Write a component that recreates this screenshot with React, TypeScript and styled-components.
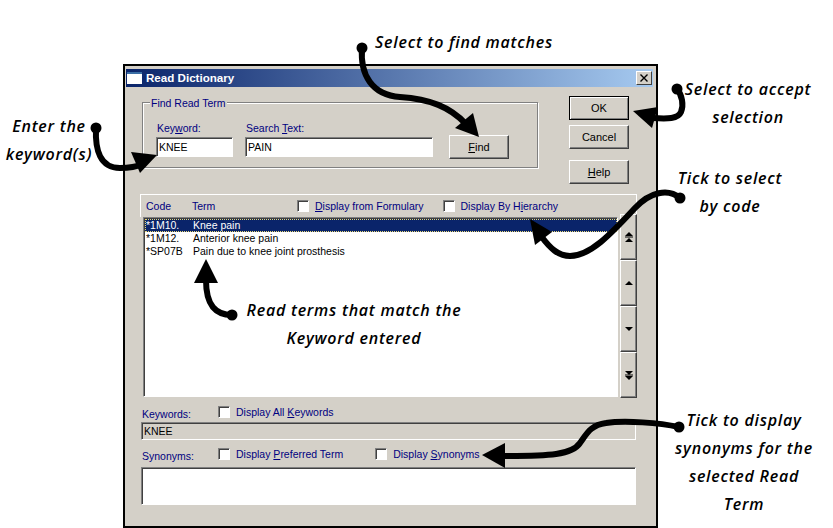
import React from "react";
import styled, { createGlobalStyle } from "styled-components";

const Global = createGlobalStyle`
  html, body { margin: 0; padding: 0; background: #fff; }
  #root { width: 833px; height: 528px; }
`;

const Canvas = styled.div`
  position: relative;
  width: 833px;
  height: 528px;
  overflow: hidden;
  background: #fff;
  padding: 64px 0 0 123px;
  box-sizing: border-box;
  font-family: "Liberation Sans", Arial, sans-serif;
  font-size: 10.5px;
`;

const Dialog = styled.div`
  width: 535px;
  height: 464px;
  box-sizing: border-box;
  background: #d4d0c8;
  border: 2px solid #000;
  padding: 3px 3px 0 1px;
  color: #000080;
`;

const TitleBar = styled.div`
  height: 18px;
  display: flex;
  align-items: center;
  background: linear-gradient(90deg, #0a246a 0%, #a6caf0 100%);
  color: #fff;
  font-weight: 700;
  font-size: 11.6px;
  padding: 0 1px 1px 0;
  box-sizing: border-box;
`;

const TitleIcon = styled.span`
  width: 15px;
  height: 12px;
  margin: 0 4px 0 1px;
  background: #fff;
  border-top: 2px solid #3a6ea5;
  box-sizing: border-box;
`;

const TitleText = styled.span`
  flex: 1;
`;

const CloseButton = styled.span`
  width: 16px;
  height: 14px;
  box-sizing: border-box;
  background: #d4d0c8;
  border: 1px solid;
  border-color: #fff #404040 #404040 #fff;
  color: #000;
  display: flex;
  align-items: center;
  justify-content: center;
`;

const TopRow = styled.div`
  display: flex;
  margin: 9px 0 0 16px;
`;

const GroupBox = styled.div`
  width: 396px;
  height: 66px;
  box-sizing: border-box;
  margin: 6px 0 0;
  padding: 0 0 0 13px;
  border: 1px solid #808080;
  box-shadow: 1px 1px 0 #fff, inset 1px 1px 0 #fff;
  position: relative;
  display: flex;
  gap: 12px;
`;

const Legend = styled.span`
  position: absolute;
  left: 7px;
  top: -6px;
  padding: 0 1px;
  line-height: 12px;
  background: #d4d0c8;
  white-space: nowrap;
`;

const FieldColumn = styled.div`
  display: flex;
  flex-direction: column;
  margin-top: 19px;
`;

const FieldLabel = styled.label`
  line-height: 13px;
  margin: 0 0 2px 1px;
  height: 13px;
  white-space: nowrap;
`;

const TextInput = styled.div<{ $w: number }>`
  width: ${(p) => p.$w}px;
  height: 20px;
  box-sizing: border-box;
  background: #fff;
  border: 1px solid;
  border-color: #808080 #fff #fff #808080;
  box-shadow: inset 1px 1px 0 #404040;
  color: #000;
  line-height: 18px;
  padding-left: 2px;
`;

const PushButton = styled.div<{ $default?: boolean }>`
  width: 60px;
  height: 24px;
  box-sizing: border-box;
  background: #d4d0c8;
  color: #000;
  font-size: 11px;
  display: flex;
  align-items: center;
  justify-content: center;
  border: 1px solid;
  border-color: ${(p) => (p.$default ? "#000" : "#fff #404040 #404040 #fff")};
  box-shadow: ${(p) => (p.$default ? "inset 1px 1px 0 #fff, inset -1px -1px 0 #808080" : "inset -1px -1px 0 #808080")};
`;

const FindButton = styled(PushButton)`
  margin: 32px 0 0 4px;
`;

const ButtonColumn = styled.div`
  display: flex;
  flex-direction: column;
  margin-left: 31px;
`;

const CancelButton = styled(PushButton)`
  margin-top: 5px;
`;

const HelpButton = styled(PushButton)`
  margin-top: 11px;
`;

const Key = styled.u`
  text-decoration: underline;
`;

const ListArea = styled.div`
  margin: 10px 0 0 14px;
  width: 497px;
`;

const ListHeader = styled.div`
  height: 23px;
  box-sizing: border-box;
  border: 1px solid #fff;
  border-bottom: 0;
  display: flex;
  align-items: center;
  padding-left: 5px;
`;

const CodeHead = styled.span`
  width: 46px;
`;

const TermHead = styled.span`
  width: 105px;
`;

const Check = styled.label<{ $gap?: number }>`
  display: inline-flex;
  align-items: center;
  gap: 6px;
  white-space: nowrap;
  margin-right: ${(p) => p.$gap ?? 0}px;
`;

const Box = styled.span`
  width: 12px;
  height: 12px;
  box-sizing: border-box;
  background: #fff;
  border: 1px solid;
  border-color: #808080 #fff #fff #808080;
  box-shadow: inset 1px 1px 0 #404040;
`;

const ListBody = styled.div`
  display: flex;
  align-items: flex-start;
`;

const TermList = styled.div`
  width: 476px;
  height: 180px;
  box-sizing: border-box;
  margin: 0 0 0 3px;
  background: #fff;
  border: 1px solid;
  border-color: #808080 #fff #fff #808080;
  box-shadow: inset 1px 1px 0 #404040;
  padding: 1px 0 0 1px;
  color: #000;
`;

const TermRow = styled.div<{ $selected?: boolean }>`
  height: 13px;
  display: flex;
  align-items: center;
  box-sizing: border-box;
  padding: 0 0 1px 1px;
  background: ${(p) => (p.$selected ? "#0a246a" : "transparent")};
  color: ${(p) => (p.$selected ? "#fff" : "#000")};
  outline: ${(p) => (p.$selected ? "1px dotted #e8d878" : "none")};
  outline-offset: -1px;
`;

const CodeCell = styled.span`
  width: 47px;
`;

const ScrollColumn = styled.div`
  width: 17px;
  margin: -3px 0 0 2px;
  display: flex;
  flex-direction: column;
`;

const ScrollButton = styled.div`
  height: 46px;
  box-sizing: border-box;
  background: #d4d0c8;
  border: 1px solid;
  border-color: #fff #404040 #404040 #fff;
  box-shadow: inset -1px -1px 0 #808080;
  display: flex;
  align-items: center;
  justify-content: center;
`;

const FieldRow = styled.div`
  display: flex;
  align-items: center;
  margin: 7px 0 0 16px;
  height: 14px;
`;

const RowLabel = styled.span`
  width: 76px;
  padding-top: 3px;
`;

const Sunken = styled.div<{ $h: number; $top: number; $white?: boolean }>`
  width: 495px;
  height: ${(p) => p.$h}px;
  box-sizing: border-box;
  margin: ${(p) => p.$top}px 0 0 15px;
  background: ${(p) => (p.$white ? "#fff" : "#d4d0c8")};
  border: 1px solid;
  border-color: #808080 #fff #fff #808080;
  box-shadow: inset 1px 1px 0 #404040;
  color: #000;
  line-height: 16px;
  padding-left: 2px;
`;

const Arrows = styled.svg`
  position: absolute;
  inset: 0;
  pointer-events: none;
`;

const Note = styled.div<{ $x: number; $y: number; $w: number }>`
  position: absolute;
  left: ${(p) => p.$x}px;
  top: ${(p) => p.$y}px;
  width: ${(p) => p.$w}px;
  text-align: center;
  font-family: "Open Sans", sans-serif;
  font-weight: 600;
  font-style: italic;
  font-size: 16px;
  letter-spacing: 0.75px;
  line-height: 28px;
  color: #000;
  white-space: nowrap;
`;

const ScrollIcon = ({ up, double }: { up: boolean; double: boolean }) => {
  const tri = (y: number) =>
    up ? `M0 ${y + 4}L4 ${y}L8 ${y + 4}Z` : `M0 ${y}L4 ${y + 4}L8 ${y}Z`;
  return (
    <svg width="8" height="12" viewBox="0 0 8 12">
      {double ? (
        <>
          <path d={tri(up ? 1 : 2)} fill="#000" />
          <rect x="0" y="5.5" width="8" height="1" fill="#000" />
          <path d={tri(7)} fill="#000" />
        </>
      ) : (
        <path d={tri(4)} fill="#000" />
      )}
    </svg>
  );
};

const arrows = [
  { d: "M96 128C95 150 100 168 120 168C130 168 136 167 143 164", dot: [96, 128], head: "131,152 157,155 140,173" },
  { d: "M362 48C360 75 372 95 400 97C430 99 450 107 466 124", dot: [362, 48], head: "455,128 473,113 479,137" },
  { d: "M677 89C682 95 684 105 681 112C678 119 668 119 652 118", dot: [677, 89], head: "658,107 633,111 652,128" },
  { d: "M680 198C668 188 650 192 635 208C610 235 590 256 570 256C558 256 550 248 541 236", dot: [680, 198], head: "530,219 552,232 535,245" },
  { d: "M232 315C216 315 206 306 206 280", dot: [232, 315], head: "206,259 194,283 218,283" },
  { d: "M679 427C660 423 625 420 606 423C590 425 586 435 580 443C572 455 550 456 503 456", dot: [679, 427], head: "482,455 505,443 505,468" },
];

export default function App() {
  return (
    <Canvas>
      <Global />
      <Dialog>
        <TitleBar>
          <TitleIcon />
          <TitleText>Read Dictionary</TitleText>
          <CloseButton>
            <svg width="8" height="8" viewBox="0 0 8 8">
              <path d="M0.5 0.5L7.5 7.5M7.5 0.5L0.5 7.5" stroke="#000" strokeWidth="1.4" />
            </svg>
          </CloseButton>
        </TitleBar>
        <TopRow>
          <GroupBox>
            <Legend>Find Read Term</Legend>
            <FieldColumn>
              <FieldLabel>Key<Key>w</Key>ord:</FieldLabel>
              <TextInput $w={77}>KNEE</TextInput>
            </FieldColumn>
            <FieldColumn>
              <FieldLabel>Search <Key>T</Key>ext:</FieldLabel>
              <TextInput $w={188}>PAIN</TextInput>
            </FieldColumn>
            <FindButton><span><Key>F</Key>ind</span></FindButton>
          </GroupBox>
          <ButtonColumn>
            <PushButton $default>OK</PushButton>
            <CancelButton>Cancel</CancelButton>
            <HelpButton><span><Key>H</Key>elp</span></HelpButton>
          </ButtonColumn>
        </TopRow>
        <ListArea>
          <ListHeader>
            <CodeHead>Code</CodeHead>
            <TermHead>Term</TermHead>
            <Check $gap={19}><Box /><span><Key>D</Key>isplay from Formulary</span></Check>
            <Check><Box /><span>Display By H<Key>i</Key>erarchy</span></Check>
          </ListHeader>
          <ListBody>
            <TermList>
              <TermRow $selected><CodeCell>*1M10.</CodeCell><span>Knee pain</span></TermRow>
              <TermRow><CodeCell>*1M12.</CodeCell><span>Anterior knee pain</span></TermRow>
              <TermRow><CodeCell>*SP07B</CodeCell><span>Pain due to knee joint prosthesis</span></TermRow>
            </TermList>
            <ScrollColumn>
              <ScrollButton><ScrollIcon up double /></ScrollButton>
              <ScrollButton><ScrollIcon up double={false} /></ScrollButton>
              <ScrollButton><ScrollIcon up={false} double={false} /></ScrollButton>
              <ScrollButton><ScrollIcon up={false} double /></ScrollButton>
            </ScrollColumn>
          </ListBody>
        </ListArea>
        <FieldRow>
          <RowLabel>Keywords:</RowLabel>
          <Check><Box /><span>Display All <Key>K</Key>eywords</span></Check>
        </FieldRow>
        <Sunken $h={18} $top={3}>KNEE</Sunken>
        <FieldRow>
          <RowLabel>Synonyms:</RowLabel>
          <Check $gap={32}><Box /><span>Display <Key>P</Key>referred Term</span></Check>
          <Check><Box /><span>Display <Key>S</Key>ynonyms</span></Check>
        </FieldRow>
        <Sunken $h={38} $top={6} $white />
      </Dialog>
      <Arrows width="833" height="528" viewBox="0 0 833 528">
        {arrows.map((a) => (
          <g key={a.d}>
            <path d={a.d} fill="none" stroke="#000" strokeWidth="6" strokeLinecap="round" />
            <circle cx={a.dot[0]} cy={a.dot[1]} r="5.5" fill="#000" />
            <polygon points={a.head} fill="#000" />
          </g>
        ))}
      </Arrows>
      <Note $x={364} $y={28} $w={200}>Select to find matches</Note>
      <Note $x={0} $y={112} $w={98}>Enter the<br />keyword(s)</Note>
      <Note $x={678} $y={75} $w={140}>Select to accept<br />selection</Note>
      <Note $x={660} $y={164} $w={140}>Tick to select<br />by code</Note>
      <Note $x={239} $y={296} $w={230}>Read terms that match the<br />Keyword entered</Note>
      <Note $x={674} $y={406} $w={140}>Tick to display<br />synonyms for the<br />selected Read<br />Term</Note>
    </Canvas>
  );
}
